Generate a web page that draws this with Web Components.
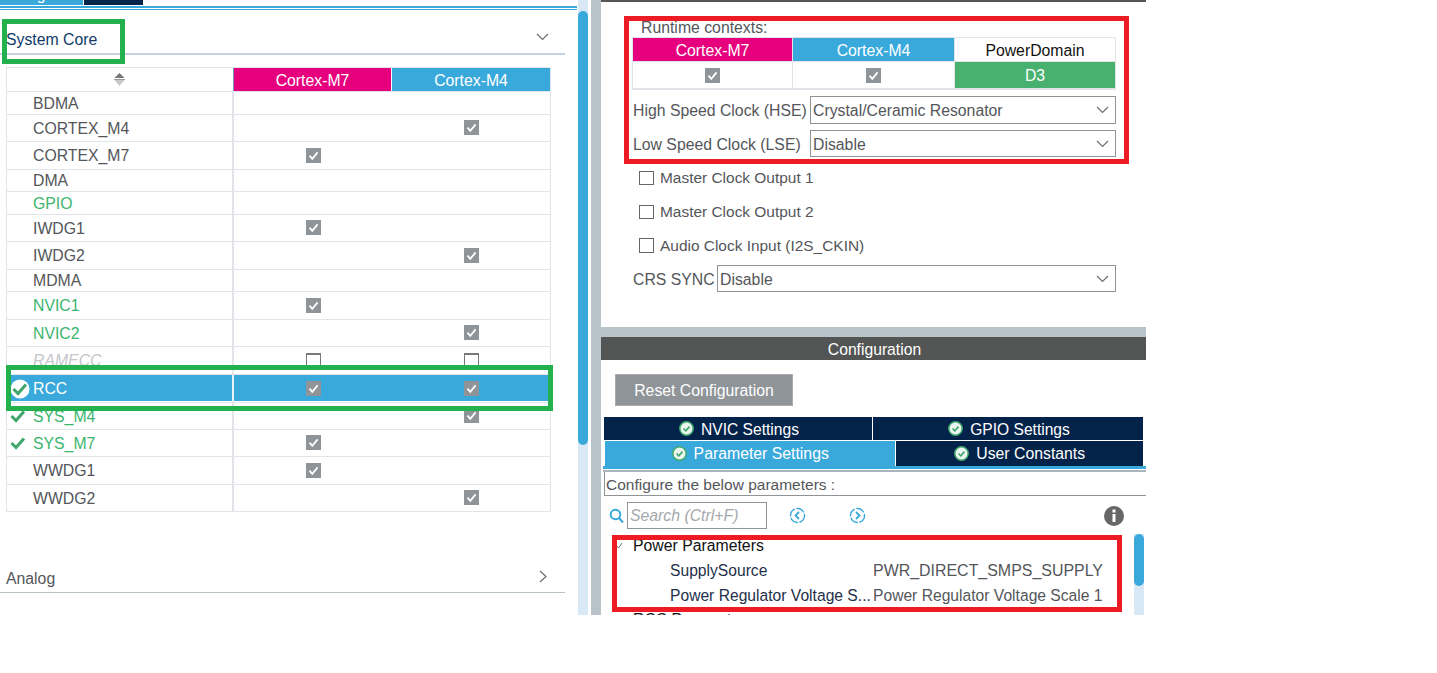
<!DOCTYPE html>
<html>
<head>
<meta charset="utf-8">
<title>Pinout configuration</title>
<style>
  html, body { margin: 0; padding: 0; background: #fff; }
  body { width: 1437px; height: 673px; overflow: hidden; font: 15.8px "Liberation Sans", Arial, sans-serif; color: #54565a; }
</style>
</head>
<body>
<ide-shell>
  <left-pane slot="left">
    <group-header title="System Core" dir="down" style="height:44px;margin-bottom:12px"></group-header>
    <periph-table>
      <periph-row name="BDMA" h="23"></periph-row>
      <periph-row name="CORTEX_M4" h="27" m4="on"></periph-row>
      <periph-row name="CORTEX_M7" h="28" m7="on"></periph-row>
      <periph-row name="DMA" h="22"></periph-row>
      <periph-row name="GPIO" h="23" kind="green"></periph-row>
      <periph-row name="IWDG1" h="27" m7="on"></periph-row>
      <periph-row name="IWDG2" h="28" m4="on"></periph-row>
      <periph-row name="MDMA" h="22"></periph-row>
      <periph-row name="NVIC1" h="28" m7="on" kind="green"></periph-row>
      <periph-row name="NVIC2" h="27" m4="on" kind="green"></periph-row>
      <periph-row name="RAMECC" h="28" m7="off" m4="off" kind="disabled"></periph-row>
      <periph-row name="RCC" h="28" m7="on" m4="on" kind="active"></periph-row>
      <periph-row name="SYS_M4" h="27" m4="on" kind="ok"></periph-row>
      <periph-row name="SYS_M7" h="27" m7="on" kind="ok"></periph-row>
      <periph-row name="WWDG1" h="28" m7="on"></periph-row>
      <periph-row name="WWDG2" h="27" m4="on"></periph-row>
    </periph-table>
    <group-header title="Analog" dir="right" style="height:32px;margin-top:49px;--line:#b8c4ca"></group-header>
    <mark-box color="#22b14c" style="left:2px;top:8px;width:123px;height:45px"></mark-box>
    <mark-box color="#22b14c" style="left:6px;top:354px;width:547px;height:46px"></mark-box>
  </left-pane>

  <mode-pane slot="mode">
    <context-table></context-table>
    <field-select label="High Speed Clock (HSE)" value="Crystal/Ceramic Resonator" width="306" h="28" style="margin-top:6px"></field-select>
    <field-select label="Low Speed Clock (LSE)" value="Disable" width="306" h="27" style="margin-top:6px"></field-select>
    <field-check label="Master Clock Output 1" style="margin-top:14px;height:14px"></field-check>
    <field-check label="Master Clock Output 2" style="margin-top:20px;height:14px"></field-check>
    <field-check label="Audio Clock Input (I2S_CKIN)" style="margin-top:19px"></field-check>
    <field-select label="CRS SYNC" value="Disable" width="399" h="27" style="margin-top:12px"></field-select>
    <mark-box color="#ed1c24" style="left:23px;top:14px;width:505px;height:148px"></mark-box>
  </mode-pane>

  <config-pane slot="config">
    <status-tabs></status-tabs>
    <param-tree></param-tree>
    <mark-box color="#ed1c24" style="left:11px;top:198px;width:510px;height:77px"></mark-box>
  </config-pane>
</ide-shell>

<script>
const checkSvg = `<svg viewBox="0 0 15 15" width="15" height="15"><path d="M3.5 7.6 6.3 10.8 11.6 4.4" fill="none" stroke="#fff" stroke-width="1.8"/></svg>`;

class IdeShell extends HTMLElement {
  constructor() {
    super();
    this.attachShadow({ mode: "open" }).innerHTML = `
      <style>
        :host { display: flex; width: 1146px; height: 615px; overflow: hidden; }
        .left { width: 577px; flex: none; display: flex; flex-direction: column; overflow: hidden; }
        .bar { width: 10px; flex: none; margin-left: 1px; background: #d8e8f5; padding-top: 11px; box-sizing: border-box; }
        .thumb { height: 434px; background: #39a9dc; border-radius: 5px; }
        .gutter { width: 10px; flex: none; margin-left: 3px; background: #b8c4ca; }
        .right { flex: 1; display: flex; flex-direction: column; min-width: 0; }
        .tabs { height: 5px; display: flex; overflow: hidden; align-items: flex-end; width: 590px; flex: none; }
        .tab { height: 5px; display: flex; align-items: flex-end; justify-content: center; color: #fff; overflow: hidden; }
        .tab span { line-height: 18px; flex: none; transform: translateY(-1px); }
        .t1 { width: 83px; background: #39a9dc; }
        .t2 { width: 59px; margin-left: 1px; background: #03234b; }
        .lines { width: 590px; height: 4px; margin: 1px 0; border-top: 2px solid #39a9dc; border-bottom: 1px solid #39a9dc; box-sizing: border-box; flex: none; }
        .topbar { height: 2px; background: #555; flex: none; }
        .gap { height: 10px; background: #b8c4ca; flex: none; }
      </style>
      <div class="left">
        <div class="tabs"><div class="tab t1"><span>Categories</span></div><div class="tab t2"><span>A-&gt;Z</span></div></div>
        <div class="lines"></div>
        <slot name="left"></slot>
      </div>
      <div class="bar"><div class="thumb"></div></div>
      <div class="gutter"></div>
      <div class="right">
        <div class="topbar"></div>
        <slot name="mode"></slot>
        <div class="gap"></div>
        <slot name="config"></slot>
      </div>`;
  }
}

class LeftPane extends HTMLElement {
  constructor() {
    super();
    this.attachShadow({ mode: "open" }).innerHTML = `
      <style>:host { display: block; position: relative; flex: 1; }</style>
      <slot></slot>`;
  }
}

class GroupHeader extends HTMLElement {
  constructor() {
    super();
    const right = this.getAttribute("dir") == "right";
    const path = right ? "M1 1 7 6.5 1 12" : "M1 1 6.5 6.5 12 1";
    this.attachShadow({ mode: "open" }).innerHTML = `
      <style>
        :host { display: flex; align-items: center; justify-content: space-between; width: 565px; box-sizing: border-box;
          padding: 15px 16px 0 6px; border-bottom: 2px solid var(--line, #c3d2e0); color: #123a6b; }
        :host([dir="right"]) { border-bottom-width: 1px; padding: 5px 18px 0 6px; color: #54565a; }
        svg { display: block; margin-bottom: 5px; }
      </style>
      <span>${this.getAttribute("title")}</span>
      <svg width="${right ? 8 : 13}" height="${right ? 13 : 8}" fill="none" stroke="#6b6f73" stroke-width="1.2"><path d="${path}"/></svg>`;
    this.removeAttribute("title");
  }
}

class BoxCheck extends HTMLElement {
  constructor() {
    super();
    this.attachShadow({ mode: "open" }).innerHTML = `
      <style>
        :host { display: block; width: 15px; height: 15px; box-sizing: border-box; background: #8f9499; }
        :host([off]) { background: #fff; border: 1px solid #77797c; border-width: 2px 1px 1px 1px; }
        svg { display: block; }
        :host([off]) svg { display: none; }
      </style>${checkSvg}`;
  }
}

class PeriphTable extends HTMLElement {
  constructor() {
    super();
    this.attachShadow({ mode: "open" }).innerHTML = `
      <style>
        :host { display: block; width: 545px; margin-left: 6px; border: 1px solid #e1e4e8; box-sizing: border-box; }
        .head { display: grid; grid-template-columns: 227px 158px 158px; height: 23px; }
        .sort { display: flex; align-items: center; justify-content: center; border-right: 1px solid #6f93c4; box-sizing: border-box; padding-right: 1px; }
        .c { display: flex; align-items: center; justify-content: center; color: #fff; padding-top: 2px; box-sizing: border-box; }
        .m7 { background: #e6007e; border-right: 1px solid #fff; }
        .m4 { background: #39a9dc; }
      </style>
      <div class="head">
        <div class="sort"><svg width="11" height="14"><path d="M5.5 0 10.5 5H.5Z" fill="#777"/><path d="M.5 7H10.5L5.5 13Z" fill="#c8c8c8"/><rect y="6" width="11" height="1" fill="#999"/></svg></div>
        <div class="c m7">Cortex-M7</div>
        <div class="c m4">Cortex-M4</div>
      </div>
      <slot></slot>`;
  }
}

class PeriphRow extends HTMLElement {
  constructor() {
    super();
    const box = (v) => (v ? `<box-check ${v == "off" ? "off" : ""}></box-check>` : "");
    const kind = this.getAttribute("kind");
    const h = Number(this.getAttribute("h"));
    // rows with an even inner height sit half a pixel off, nudge them
    const textPad = h % 2 ? 2 : 0;
    const boxPad = h % 2 ? 1 : 0;
    let mark = "";
    if (kind == "ok") {
      mark = `<svg class="mark" width="16" height="14"><path d="M1.5 7 6 11.5 14 2.5" fill="none" stroke="#3fa76c" stroke-width="3"/></svg>`;
    } else if (kind == "active") {
      mark = `<svg class="mark" width="20" height="20"><circle cx="10" cy="10" r="9.5" fill="#fff"/><path d="M3.5 10 8 14.5 16 5.5" fill="none" stroke="#3fa76c" stroke-width="3"/></svg>`;
    }
    this.attachShadow({ mode: "open" }).innerHTML = `
      <style>
        :host { display: grid; grid-template-columns: 227px 158px 158px; height: ${h}px; box-sizing: border-box; border-top: 1px solid #e1e4e8; }
        :host([kind="green"]), :host([kind="ok"]) { color: #3cb56e; }
        :host([kind="disabled"]) { color: #c3c6ca; font-style: italic; }
        :host([kind="active"]) { color: #fff; background: linear-gradient(#39a9dc 26px, #fff 26px); }
        .name { position: relative; display: flex; align-items: center; padding: ${textPad}px 0 0 26px; border-right: 2px solid #e1e4e8; box-sizing: border-box; }
        :host([kind="active"]) .name { border-right-color: #e8f3fa; }
        .cell { display: flex; align-items: center; justify-content: center; padding-bottom: ${boxPad}px; box-sizing: border-box; }
        .cell:nth-child(2) { border-right: 1px solid #e1e4e8; }
        :host([kind="active"]) .cell:nth-child(2) { border-right-color: #e8f3fa; }
        .mark { position: absolute; left: 3px; top: 50%; transform: translateY(-50%); }
      </style>
      <div class="name">${mark}<span>${this.getAttribute("name")}</span></div>
      <div class="cell">${box(this.getAttribute("m7"))}</div>
      <div class="cell">${box(this.getAttribute("m4"))}</div>`;
  }
}

class MarkBox extends HTMLElement {
  constructor() {
    super();
    this.attachShadow({ mode: "open" }).innerHTML = `
      <style>:host { position: absolute; box-sizing: border-box; border: 5px solid ${this.getAttribute("color")}; pointer-events: none; }</style>`;
  }
}

class ModePane extends HTMLElement {
  constructor() {
    super();
    this.attachShadow({ mode: "open" }).innerHTML = `
      <style>:host { display: block; position: relative; height: 325px; box-sizing: border-box; padding: 17px 30px 0 31px; }
      </style><slot></slot>`;
  }
}

class ContextTable extends HTMLElement {
  constructor() {
    super();
    this.attachShadow({ mode: "open" }).innerHTML = `
      <style>
        :host { display: block; width: 484px; }
        .title { padding-left: 9px; height: 18px; line-height: 18px; }
        .grid { display: grid; grid-template-columns: 160px 1px 161px 1px 161px; grid-template-rows: 24px 26px; background: #fff; border-bottom: 2px solid #e1e4e8; border-top: 1px solid #e1e4e8; }
        .c { display: flex; align-items: center; justify-content: center; color: #fff; box-sizing: border-box; padding-top: 1px; }
        .sep { background: #e1e4e8; }
        .m7 { background: #e6007e; border-left: 1px solid #e1e4e8; border-bottom: 1px solid #e1e4e8; padding-top: 2px; }
        .m4 { background: #39a9dc; border-bottom: 1px solid #e1e4e8; padding-top: 2px; }
        .pd { color: #111; border-bottom: 1px solid #e1e4e8; border-right: 1px solid #e1e4e8; padding-top: 2px; }
        .d3 { background: #49b170; border-right: 1px solid #e1e4e8; }
        .w { border-left: 1px solid #e1e4e8; }
      </style>
      <div class="title">Runtime contexts:</div>
      <div class="grid">
        <div class="c m7">Cortex-M7</div><div class="sep"></div>
        <div class="c m4">Cortex-M4</div><div class="sep"></div>
        <div class="c pd">PowerDomain</div>
        <div class="c w"><box-check></box-check></div><div class="sep"></div>
        <div class="c"><box-check></box-check></div><div class="sep"></div>
        <div class="c d3">D3</div>
      </div>`;
  }
}

class FieldSelect extends HTMLElement {
  constructor() {
    super();
    this.attachShadow({ mode: "open" }).innerHTML = `
      <style>
        :host { display: flex; align-items: center; width: 484px; height: ${this.getAttribute("h")}px; justify-content: space-between; padding-left: 1px; box-sizing: border-box; }
        .box { width: ${this.getAttribute("width")}px; height: 100%; box-sizing: border-box; border: 1px solid #8f9499; display: flex; align-items: center; justify-content: space-between; padding: 0 6px 0 2px; }
        span { position: relative; top: 1px; }
        svg { display: block; }
      </style>
      <span>${this.getAttribute("label")}</span>
      <div class="box"><span>${this.getAttribute("value")}</span>
        <svg width="13" height="8" fill="none" stroke="#6b6f73" stroke-width="1.2"><path d="M1 1 6.5 6.5 12 1"/></svg>
      </div>`;
  }
}

class FieldCheck extends HTMLElement {
  constructor() {
    super();
    this.attachShadow({ mode: "open" }).innerHTML = `
      <style>
        :host { display: flex; align-items: center; height: 15px; padding-left: 7px; gap: 6px; font-size: 15.45px; }
        i { display: block; width: 15px; height: 100%; box-sizing: border-box; border: 1px solid #666; }
      </style>
      <i></i><span>${this.getAttribute("label")}</span>`;
  }
}

class ConfigPane extends HTMLElement {
  constructor() {
    super();
    this.attachShadow({ mode: "open" }).innerHTML = `
      <style>
        :host { display: block; position: relative; flex: 1; min-height: 0; overflow: hidden; }
        .title { height: 23px; background: #535554; color: #fff; display: flex; align-items: center; justify-content: center; padding: 2px 0 0 2px; box-sizing: border-box; font-size: 15.7px; }
      </style>
      <div class="title">Configuration</div>
      <slot></slot>`;
  }
}

const okIcon = `<svg width="15" height="15"><circle cx="7.5" cy="7.5" r="6.7" fill="#e9f5ee" stroke="#3fa76c" stroke-width="1.5"/><path d="M4.5 7.5 6.8 9.8 10.5 5.6" fill="none" stroke="#3fa76c" stroke-width="1.6"/></svg>`;

class StatusTabs extends HTMLElement {
  constructor() {
    super();
    const tab = (label, cls) => `<div class="tab ${cls}">${okIcon}<span>${label}</span></div>`;
    this.attachShadow({ mode: "open" }).innerHTML = `
      <style>
        :host { display: block; }
        .reset { width: 178px; height: 32px; margin: 14px 0 11px 14px; background: #8f9499; color: #fff; display: flex; align-items: center; justify-content: center; box-shadow: inset 0 0 0 1px #a7abaf; padding-top: 1px; box-sizing: border-box; }
        .row { display: flex; margin-left: 3px; width: 539px; gap: 1px; }
        .r1 { height: 23px; font-size: 15.6px; }
        .r2 { height: 25px; margin-top: 1px; }
        .tab { display: flex; align-items: center; justify-content: center; gap: 7px; color: #fff; background: #03234b; box-sizing: border-box; }
        .r1 .tab { padding: 0 0 0 2px; }
        .r1 span { position: relative; top: 1px; }
        svg { display: block; flex: none; }
        .a { width: 268px; }
        .b { width: 270px; }
        .p { width: 291px; background: #39a9dc; margin-left: 1px; }
        .u { width: 247px; }
        .lines { height: 6px; box-sizing: border-box; border-top: 3px solid #39a9dc; border-bottom: 2px solid #a9b4bc; margin-left: 2px; background: #fff; }
      </style>
      <div class="reset">Reset Configuration</div>
      <div class="row r1">${tab("NVIC Settings", "a")}${tab("GPIO Settings", "b")}</div>
      <div class="row r2">${tab("Parameter Settings", "p")}${tab("User Constants", "u")}</div>
      <div class="lines"></div>`;
  }
}

class ParamTree extends HTMLElement {
  constructor() {
    super();
    this.attachShadow({ mode: "open" }).innerHTML = `
      <style>
        :host { display: block; position: relative; }
        .cfg { margin-left: 3px; height: 24px; box-sizing: border-box; border: 1px solid #8f9499; border-width: 0 0 1px 1px; line-height: 25px; padding-left: 1px; font-size: 15.5px; }
        .search { display: flex; align-items: center; height: 27px; margin-top: 6px; padding-left: 8px; }
        .field { width: 140px; height: 27px; box-sizing: border-box; border: 1px solid #8f9499; margin-left: 3px; padding-left: 2px; display: flex; align-items: center; font-style: italic; color: #a5a8ac; }
        .nav { margin-left: 22px; }
        .nav2 { margin-left: 43px; }
        .info { margin-left: 238px; }
        svg { display: block; flex: none; }
        .tree { height: 87px; margin-top: 5px; display: flex; }
        .rows { width: 529px; padding-top: 2px; box-sizing: border-box; }
        .row { display: flex; height: 25px; align-items: center; }
        .head { color: #111; padding-left: 32px; position: relative; height: 20px; margin-bottom: 2px; }
        .head svg { position: absolute; left: 15px; top: 6px; }
        .k { width: 203px; margin-left: 69px; color: #24304a; flex: none; white-space: nowrap; font-size: 15.65px; }
        .v { white-space: nowrap; font-size: 15.65px; }
        .v.caps { font-size: 15.94px; }
        .sub { color: #111; padding-left: 32px; height: 25px; margin-top: -1px; }
        .sb { width: 10px; margin-left: 4px; background: #d8e8f5; height: 87px; }
        .sb div { height: 52px; background: #39a9dc; border-radius: 5px; }
      </style>
      <div class="cfg">Configure the below parameters :</div>
      <div class="search">
        <svg width="15" height="16" fill="none" stroke="#39a9dc" stroke-width="2"><circle cx="6.5" cy="6.5" r="4.8"/><path d="M10 10 14 14.5"/></svg>
        <div class="field">Search (Ctrl+F)</div>
        <svg class="nav" width="17" height="17" fill="none" stroke="#39a9dc" stroke-width="1.4"><circle cx="8.5" cy="8.5" r="7" stroke-dasharray="9 1.5"/><path d="M10 5 6.5 8.5 10 12" stroke-width="1.8"/></svg>
        <svg class="nav2" width="17" height="17" fill="none" stroke="#39a9dc" stroke-width="1.4"><circle cx="8.5" cy="8.5" r="7" stroke-dasharray="9 1.5"/><path d="M7 5 10.5 8.5 7 12" stroke-width="1.8"/></svg>
        <svg class="info" width="20" height="20"><circle cx="10" cy="10" r="10" fill="#666"/><rect x="8.5" y="8" width="3" height="8" fill="#fff"/><rect x="8.5" y="3.5" width="3" height="3" fill="#fff"/></svg>
      </div>
      <div class="tree">
        <div class="rows">
          <div class="row head"><svg width="7" height="7" fill="none" stroke="#777"><path d="M1 4 2.5 6 6 1"/></svg><span>Power Parameters</span></div>
          <div class="row"><span class="k">SupplySource</span><span class="v caps">PWR_DIRECT_SMPS_SUPPLY</span></div>
          <div class="row"><span class="k">Power Regulator Voltage S...</span><span class="v">Power Regulator Voltage Scale 1</span></div>
          <div class="row sub"><span>RCC Parameters</span></div>
        </div>
        <div class="sb"><div></div></div>
      </div>`;
  }
}

customElements.define("box-check", BoxCheck);
customElements.define("mark-box", MarkBox);
customElements.define("group-header", GroupHeader);
customElements.define("periph-row", PeriphRow);
customElements.define("periph-table", PeriphTable);
customElements.define("left-pane", LeftPane);
customElements.define("context-table", ContextTable);
customElements.define("field-select", FieldSelect);
customElements.define("field-check", FieldCheck);
customElements.define("mode-pane", ModePane);
customElements.define("status-tabs", StatusTabs);
customElements.define("param-tree", ParamTree);
customElements.define("config-pane", ConfigPane);
customElements.define("ide-shell", IdeShell);
</script>
</body>
</html>
